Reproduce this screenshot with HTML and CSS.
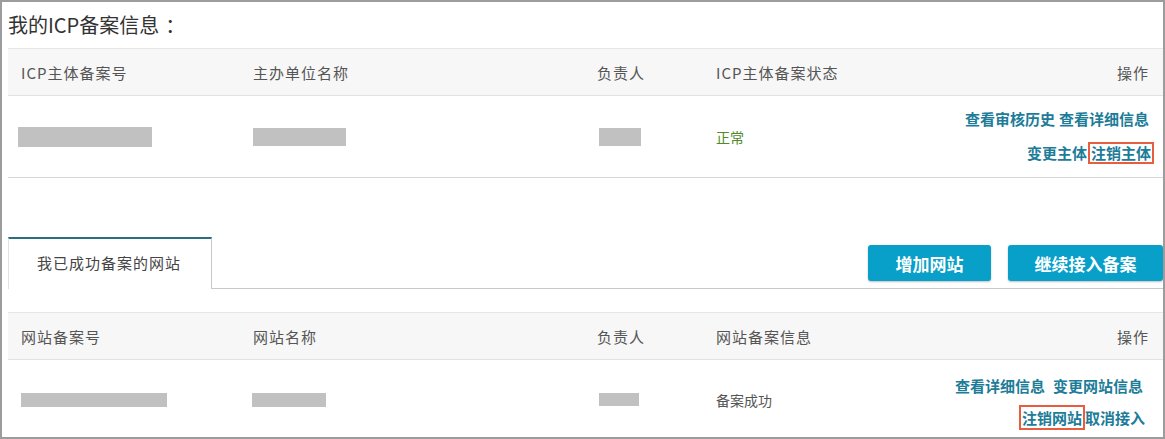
FILE: index.html
```html
<!DOCTYPE html>
<html lang="zh-CN">
  <head>
    <meta charset="UTF-8" />
    <meta name="viewport" content="width=device-width, initial-scale=1.0" />
    <title>我的ICP备案信息</title>
    <link rel="stylesheet" href="styles.css">
  </head>
  <body>
    <div class="frame">
      <h2 class="title">我的ICP备案信息<span class="colon">：</span></h2>

      <div class="table">
        <div class="thead">
          <div class="cell">ICP主体备案号</div>
          <div class="cell">主办单位名称</div>
          <div class="cell">负责人</div>
          <div class="cell">ICP主体备案状态</div>
          <div class="cell cell-ops">操作</div>
        </div>
        <div class="trow trow-main">
          <div class="cell"><span class="mask mask-shift" style="width: 134px; height: 20px"></span></div>
          <div class="cell"><span class="mask" style="width: 93px; height: 18px"></span></div>
          <div class="cell"><span class="mask mask-near" style="width: 42px; height: 18px"></span></div>
          <div class="cell status-ok">正常</div>
          <div class="cell cell-ops">
            <div class="ops">
              <div class="ops-line">
                <a href="#" class="op">查看审核历史</a>
                <a href="#" class="op">查看详细信息</a>
              </div>
              <div class="ops-line">
                <a href="#" class="op">变更主体</a>
                <a href="#" class="op op-marked">注销主体</a>
              </div>
            </div>
          </div>
        </div>
      </div>

      <div class="tabbar">
        <div class="tab">我已成功备案的网站</div>
        <div class="tab-tools">
          <button class="btn btn-add">增加网站</button>
          <button class="btn btn-go">继续接入备案</button>
        </div>
      </div>

      <div class="table table-sites">
        <div class="thead">
          <div class="cell">网站备案号</div>
          <div class="cell">网站名称</div>
          <div class="cell">负责人</div>
          <div class="cell">网站备案信息</div>
          <div class="cell cell-ops">操作</div>
        </div>
        <div class="trow trow-site">
          <div class="cell"><span class="mask" style="width: 146px; height: 14px"></span></div>
          <div class="cell"><span class="mask mask-back" style="width: 74px; height: 14px"></span></div>
          <div class="cell"><span class="mask mask-near" style="width: 40px; height: 13px"></span></div>
          <div class="cell status-text">备案成功</div>
          <div class="cell cell-ops">
            <div class="ops ops-site">
              <div class="ops-line ops-wide">
                <a href="#" class="op">查看详细信息</a>
                <a href="#" class="op">变更网站信息</a>
              </div>
              <div class="ops-line ops-tight">
                <a href="#" class="op op-marked op-tall">注销网站</a>
                <a href="#" class="op">取消接入</a>
              </div>
            </div>
          </div>
        </div>
      </div>
    </div>
  </body>
</html>
```

FILE: styles.css
```css
*,
*::before,
*::after {
  margin: 0;
  padding: 0;
  box-sizing: border-box;
}

body {
  font-family: "Noto Sans CJK SC", "Liberation Sans", sans-serif;
  color: #333;
  background: #fff;
}

.frame {
  width: 1165px;
  height: 439px;
  border: 2px solid #9c9c9c;
  padding: 9px 0 0 6px;
  overflow: hidden;
}

.title {
  font-size: 20px;
  font-weight: normal;
  line-height: 28px;
  color: #333;
  margin-bottom: 9px;
}

.title .colon {
  padding-left: 6px;
}

/* tables */
.table {
  border-top: 1px solid #e6e6e6;
}

.thead,
.trow {
  display: grid;
  grid-template-columns: 232px 344px 119px 1fr auto;
  align-items: center;
}

.thead {
  height: 47px;
  background: #f7f7f7;
  border-bottom: 1px solid #e2e2e2;
  font-size: 15px;
  letter-spacing: 1px;
  color: #555;
}

.cell {
  padding-left: 13px;
}

.cell-ops {
  padding-right: 14px;
  text-align: right;
}

.trow-main {
  height: 82px;
  border-bottom: 1px solid #d6d6d6;
}

.trow-site {
  height: 79px;
}

.mask {
  display: block;
  background: #c1c1c1;
}

.mask-shift {
  margin-left: -3px;
}

.mask-near {
  margin-left: 2px;
}

.mask-back {
  margin-left: -1px;
}

.status-ok {
  font-size: 14px;
  color: #4e8b2a;
}

.status-text {
  font-size: 14px;
  color: #555;
}

/* action links */
.ops {
  display: flex;
  flex-direction: column;
  align-items: flex-end;
  gap: 12px;
  align-self: start;
}

.trow-main .cell-ops {
  align-self: start;
  padding-top: 12px;
  padding-right: 9px;
}

.ops-line {
  display: flex;
  align-items: center;
  gap: 4px;
  line-height: 22px;
}

.op {
  font-size: 15px;
  font-weight: bold;
  color: #1d7c98;
  text-decoration: none;
}

.op-marked {
  border: 2px solid #e85d3d;
  padding: 0 1px;
  line-height: 18px;
}

.trow-main .ops-line:first-child {
  padding-right: 5px;
}

.trow-main .ops-line:last-child {
  gap: 1px;
}

.trow-site .cell-ops {
  align-self: start;
  padding-top: 15px;
  padding-right: 18px;
}

.ops-site {
  gap: 8px;
}

.ops-wide {
  gap: 8px;
  padding-right: 2px;
}

.ops-tight {
  gap: 0;
}

.op-tall {
  line-height: 21px;
}

/* tabs */
.tabbar {
  display: flex;
  margin-top: 59px;
  height: 52px;
  border-bottom: 1px solid #c9c9c9;
}

.tab {
  width: 204px;
  height: 52px;
  border-top: 2px solid #2a6f80;
  border-left: 1px solid #e2e2e2;
  border-right: 1px solid #c9c9c9;
  background: #fff;
  font-size: 15px;
  letter-spacing: 1px;
  color: #444;
  padding-left: 28px;
  line-height: 48px;
}

.tab-tools {
  margin-left: auto;
  display: flex;
  gap: 17px;
  padding-top: 8px;
}

.btn {
  height: 36px;
  border: none;
  border-radius: 3px;
  background: #08a0c8;
  color: #fff;
  font-family: inherit;
  font-size: 17px;
  font-weight: bold;
  box-shadow: 0 1px 2px rgba(0, 0, 0, 0.25);
  cursor: pointer;
}

.btn-add {
  width: 123px;
}

.btn-go {
  width: 155px;
}

.btn:hover {
  background: #0691b6;
}

.table-sites {
  margin-top: 23px;
}
```
